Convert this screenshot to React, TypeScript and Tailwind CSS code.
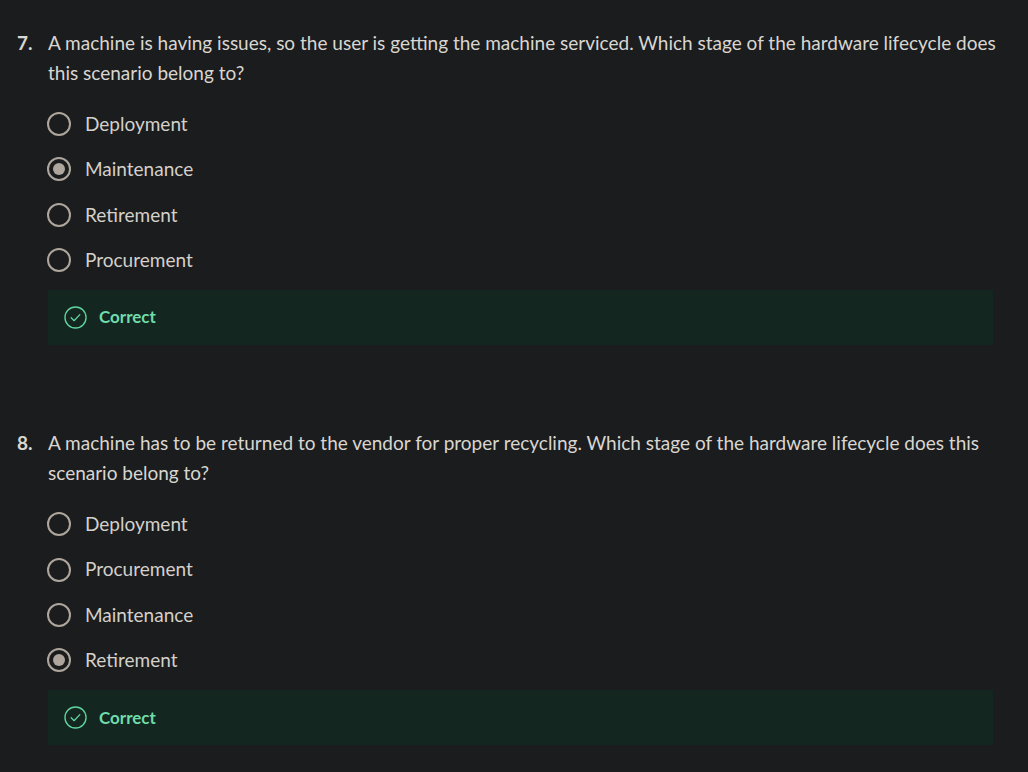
import React from "react";

type Q = { n: number; text: string; options: string[]; selected: number };

const questions: Q[] = [
  {
    n: 7,
    text: "A machine is having issues, so the user is getting the machine serviced. Which stage of the hardware lifecycle does this scenario belong to?",
    options: ["Deployment", "Maintenance", "Retirement", "Procurement"],
    selected: 1,
  },
  {
    n: 8,
    text: "A machine has to be returned to the vendor for proper recycling. Which stage of the hardware lifecycle does this scenario belong to?",
    options: ["Deployment", "Procurement", "Maintenance", "Retirement"],
    selected: 3,
  },
];

function Radio({ checked }: { checked: boolean }) {
  return (
    <span className="flex h-[24px] w-[24px] shrink-0 items-center justify-center rounded-full border-[2.5px] border-[#aea69c]">
      {checked && <span className="h-[12px] w-[12px] rounded-full bg-[#aea69c]" />}
    </span>
  );
}

function Question({ q }: { q: Q }) {
  return (
    <div className="flex flex-col">
      <div className="flex pr-[30px]">
        <span className="w-[31px] shrink-0 text-[19px] font-bold leading-[30px] text-[#d9d6d0]">{q.n}.</span>
        <p className="text-[19px] leading-[30px] text-[#d9d6d0]">{q.text}</p>
      </div>
      <div className="mt-[24px] flex flex-col gap-[21.4px] pl-[30px]">
        {q.options.map((o, i) => (
          <div key={o} className="flex h-[24px] items-center gap-[14px]">
            <Radio checked={i === q.selected} />
            <span className="text-[19px] text-[#d4d0ca]">{o}</span>
          </div>
        ))}
      </div>
      <div className="ml-[31px] mr-[35px] mt-[18px] flex h-[55px] items-center gap-[12px] bg-[#142620] pl-[16px]">
        <svg width="23" height="23" viewBox="0 0 24 24" fill="none" stroke="#5fd49e" strokeWidth="1.4">
          <circle cx="12" cy="12" r="11" />
          <path d="M7.5 12.3l3 3 6-6.3" strokeLinecap="round" strokeLinejoin="round" />
        </svg>
        <span className="-mt-[1px] text-[17px] font-bold text-[#6fdcab]">Correct</span>
      </div>
    </div>
  );
}

export default function App() {
  return (
    <div
      className="min-h-[772px] w-[1028px] bg-[#1b1c1e] pl-[17px] pt-[28px]"
      style={{ fontFamily: "Lato, 'Open Sans', sans-serif" }}
    >
      <div className="flex flex-col gap-[83px]">
        {questions.map((q) => (
          <Question key={q.n} q={q} />
        ))}
      </div>
    </div>
  );
}
